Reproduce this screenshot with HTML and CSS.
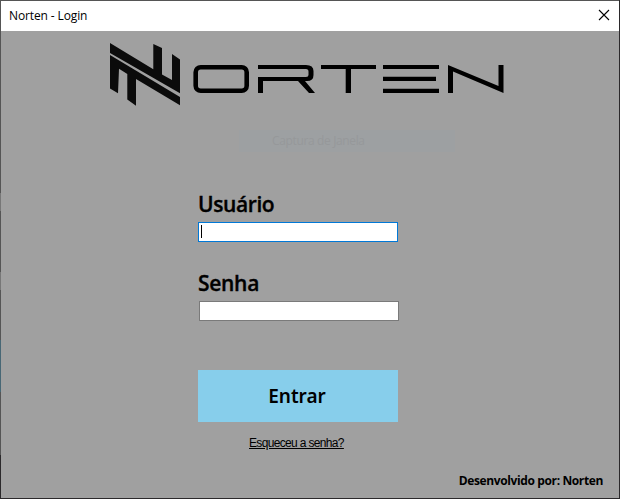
FILE: index.html
```html
<!DOCTYPE html>
<html lang="pt-BR">
<head>
<meta charset="utf-8">
<title>Norten - Login</title>
<link rel="stylesheet" href="styles.css">
</head>
<body>
<div class="window">
  <header class="titlebar">
    <span class="title">Norten - Login</span>
    <svg class="close" width="12" height="12" viewBox="0 0 12 12"><path d="M1 1L11 11M11 1L1 11"/></svg>
  </header>
  <main class="content">
    <svg class="logo" width="396" height="64" viewBox="109 42 396 64">
      <g class="mark">
        <path d="M110 43L153.3 69.2V44L162 48V74.5L172 80V54L180 59.5V93.3L110 53Z"/>
        <path d="M110 55L180 97V105.3L136 79V105.7L127.3 99.5V74L119 68.7L118 93.3L110 88.5Z"/>
      </g>
      <rect class="ring" x="195.7" y="67.2" width="51" height="23.6" rx="5"/>
      <path d="M258 65H306Q313.5 65 313.5 71V75Q313.5 81 307 81H305L315 93H309L298 81H263V93H258V77H306Q308.5 77 308.5 75V71.5Q308.5 69 306 69H258Z"/>
      <path d="M321 65H376V69H351V93H345.7V69H321Z"/>
      <path d="M383 65H439V69H383ZM383 76.7H436V81H383ZM383 88.7H439V93H383Z"/>
      <path d="M448 65L498.5 86V65H503.5V93L453 71.5V93H448Z"/>
    </svg>
    <div class="ghost">Captura de Janela</div>
    <form class="form">
      <label class="label user">Usuário</label>
      <div class="field focused"><span class="caret"></span></div>
      <label class="label pass">Senha</label>
      <div class="field second"></div>
      <button class="enter" type="button">Entrar</button>
      <a class="forgot">Esqueceu a senha?</a>
    </form>
    <footer class="credit">Desenvolvido por: Norten</footer>
  </main>
</div>
</body>
</html>
```
FILE: styles.css
```css
* { box-sizing: border-box; }
body { margin: 0; font-family: "Open Sans", "Noto Sans", sans-serif; color: #000; }
.window {
  width: 620px;
  height: 499px;
  padding: 1px;
  background:
    linear-gradient(#555, #555) 0 0 / 619px 1px no-repeat,
    linear-gradient(#555 193px, #777 193px 211px, #555 211px 272px, #777 272px 290px, #555 290px 340px, #476775 340px 392px, #555 392px 455px, #2b292b 455px) 0 0 / 1px 100% no-repeat,
    #2b292b;
}
.titlebar {
  height: 30px;
  padding: 0 9px 0 8px;
  background: #fff;
  display: flex;
  align-items: center;
  justify-content: space-between;
}
.title { font-size: 12px; line-height: 30px; letter-spacing: -.12px; }
.close { margin-top: -2px; fill: none; stroke: #000; stroke-width: 1.1; }
.content {
  height: 467px;
  background: #a0a0a0;
  display: flex;
  flex-direction: column;
}
.logo { margin: 11px 0 0 108px; flex: none; }
.mark { fill: #0b0b0b; }
.ring { fill: none; stroke: #000; stroke-width: 4.6; }
.ghost {
  margin: 24px 0 0 238px;
  width: 216px;
  height: 22px;
  padding-left: 33px;
  background: #9da0a2;
  color: #96989a;
  font-size: 12px;
  line-height: 22px;
  letter-spacing: -.36px;
}
.form { margin-left: 197px; width: 201px; display: flex; flex-direction: column; }
.label { height: 30px; font-size: 21px; line-height: 30px; font-weight: 600; }
.user { margin-top: 37px; letter-spacing: -.4px; -webkit-text-stroke: .35px #000; }
.pass { margin-top: 26px; letter-spacing: -.3px; -webkit-text-stroke: .35px #000; }
.field { width: 200px; height: 20px; background: #fff; border: 1px solid #7a7a7a; }
.user + .field { margin-top: 3px; }
.focused { border-color: #0078d7; padding: 2px; }
.caret { display: block; width: 1px; height: 13px; background: #000; }
.second { margin: 3px 0 0 1px; }
.enter {
  margin-top: 49px;
  padding: 0 2px 0 0;
  width: 200px;
  height: 52px;
  border: 0;
  background: #87ceeb;
  color: #000;
  font: 600 19px "Noto Sans", sans-serif;
}
.forgot {
  margin: 13px 0 0 51px;
  align-self: flex-start;
  font: 12px/16px "Liberation Sans", sans-serif;
  text-decoration: underline;
  letter-spacing: -.66px;
  white-space: nowrap;
}
.credit {
  margin: auto 16px 8px auto;
  font-size: 12px;
  line-height: 18px;
  font-weight: 700;
  letter-spacing: -.38px;
}
```
